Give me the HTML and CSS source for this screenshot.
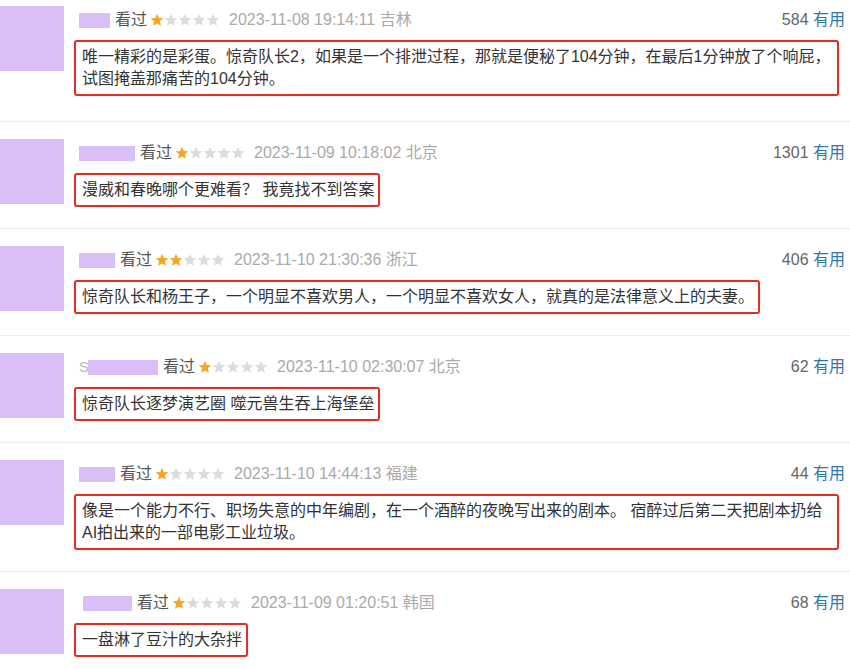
FILE: index.html
```html
<!DOCTYPE html>
<html>
<head>
    <meta charset="utf-8">
    <title>短评</title>
    <link rel="stylesheet" href="styles.css">
</head>
<body>
    <svg class="defs" width="0" height="0">
        <symbol id="star" viewBox="0 0 14 14">
            <polygon points="7,0.8 8.8,5 13.3,5.3 9.9,8.3 10.9,12.8 7,10.4 3.1,12.8 4.1,8.3 0.7,5.3 5.2,5"/>
        </symbol>
    </svg>

    <div class="comments">
        <div class="comment first">
            <div class="avatar"></div>
            <div class="main">
                <div class="meta">
                    <div class="info">
                        <span class="mask mask-xs"></span>
                        <span class="watched">看过</span>
                        <span class="stars">
                            <svg class="star on"><use href="#star"/></svg><svg class="star"><use href="#star"/></svg><svg class="star"><use href="#star"/></svg><svg class="star"><use href="#star"/></svg><svg class="star"><use href="#star"/></svg>
                        </span>
                        <span class="time">2023-11-08 19:14:11 吉林</span>
                    </div>
                    <div class="votes">584 <span class="useful">有用</span></div>
                </div>
                <p class="text">唯一精彩的是彩蛋。惊奇队长2，如果是一个排泄过程，那就是便秘了104分钟，在最后1分钟放了个响屁，试图掩盖那痛苦的104分钟。</p>
            </div>
        </div>

        <div class="comment">
            <div class="avatar"></div>
            <div class="main">
                <div class="meta">
                    <div class="info">
                        <span class="mask mask-l"></span>
                        <span class="watched">看过</span>
                        <span class="stars">
                            <svg class="star on"><use href="#star"/></svg><svg class="star"><use href="#star"/></svg><svg class="star"><use href="#star"/></svg><svg class="star"><use href="#star"/></svg><svg class="star"><use href="#star"/></svg>
                        </span>
                        <span class="time">2023-11-09 10:18:02 北京</span>
                    </div>
                    <div class="votes">1301 <span class="useful">有用</span></div>
                </div>
                <p class="text">漫威和春晚哪个更难看？ 我竟找不到答案</p>
            </div>
        </div>

        <div class="comment">
            <div class="avatar"></div>
            <div class="main">
                <div class="meta">
                    <div class="info">
                        <span class="mask mask-s"></span>
                        <span class="watched">看过</span>
                        <span class="stars">
                            <svg class="star on"><use href="#star"/></svg><svg class="star on"><use href="#star"/></svg><svg class="star"><use href="#star"/></svg><svg class="star"><use href="#star"/></svg><svg class="star"><use href="#star"/></svg>
                        </span>
                        <span class="time">2023-11-10 21:30:36 浙江</span>
                    </div>
                    <div class="votes">406 <span class="useful">有用</span></div>
                </div>
                <p class="text">惊奇队长和杨王子，一个明显不喜欢男人，一个明显不喜欢女人，就真的是法律意义上的夫妻。</p>
            </div>
        </div>

        <div class="comment">
            <div class="avatar"></div>
            <div class="main">
                <div class="meta">
                    <div class="info">
                        <span class="initial">S</span><span class="mask mask-xl"></span>
                        <span class="watched">看过</span>
                        <span class="stars">
                            <svg class="star on"><use href="#star"/></svg><svg class="star"><use href="#star"/></svg><svg class="star"><use href="#star"/></svg><svg class="star"><use href="#star"/></svg><svg class="star"><use href="#star"/></svg>
                        </span>
                        <span class="time">2023-11-10 02:30:07 北京</span>
                    </div>
                    <div class="votes">62 <span class="useful">有用</span></div>
                </div>
                <p class="text">惊奇队长逐梦演艺圈 噬元兽生吞上海堡垒</p>
            </div>
        </div>

        <div class="comment">
            <div class="avatar"></div>
            <div class="main">
                <div class="meta">
                    <div class="info">
                        <span class="mask mask-s"></span>
                        <span class="watched">看过</span>
                        <span class="stars">
                            <svg class="star on"><use href="#star"/></svg><svg class="star"><use href="#star"/></svg><svg class="star"><use href="#star"/></svg><svg class="star"><use href="#star"/></svg><svg class="star"><use href="#star"/></svg>
                        </span>
                        <span class="time">2023-11-10 14:44:13 福建</span>
                    </div>
                    <div class="votes">44 <span class="useful">有用</span></div>
                </div>
                <p class="text">像是一个能力不行、职场失意的中年编剧，在一个酒醉的夜晚写出来的剧本。 宿醉过后第二天把剧本扔给AI拍出来的一部电影工业垃圾。</p>
            </div>
        </div>

        <div class="comment">
            <div class="avatar"></div>
            <div class="main">
                <div class="meta">
                    <div class="info">
                        <span class="mask mask-m"></span>
                        <span class="watched">看过</span>
                        <span class="stars">
                            <svg class="star on"><use href="#star"/></svg><svg class="star"><use href="#star"/></svg><svg class="star"><use href="#star"/></svg><svg class="star"><use href="#star"/></svg><svg class="star"><use href="#star"/></svg>
                        </span>
                        <span class="time">2023-11-09 01:20:51 韩国</span>
                    </div>
                    <div class="votes">68 <span class="useful">有用</span></div>
                </div>
                <p class="text">一盘淋了豆汁的大杂拌</p>
            </div>
        </div>
    </div>
</body>
</html>
```

FILE: styles.css
```css
/* Basic page */
body {
    margin: 0;
    background: #fff;
    color: #333;
    font-family: "Liberation Sans", "Noto Sans CJK SC", sans-serif;
    font-size: 16px;
}
.defs {
    position: absolute;
    width: 0;
    height: 0;
}

/* One comment row */
.comment {
    display: flex;
    align-items: flex-start;
    padding: 17px 0 21px;
    border-bottom: 1px solid #eeeeee;
}
.comment.first {
    padding-top: 6px;
    padding-bottom: 25px;
}
.avatar {
    flex: none;
    width: 64px;
    height: 65px;
    background-color: #dabef7;
}
.main {
    flex: 1;
    margin-left: 10px;
    padding-right: 5px;
}

/* Name, rating and time line */
.meta {
    display: flex;
    justify-content: space-between;
    align-items: center;
    height: 24px;
    margin-top: 2px;
    line-height: 24px;
}
.info {
    display: flex;
    align-items: center;
    padding-left: 5px;
}
.mask {
    display: inline-block;
    height: 15px;
    background-color: #dabef7;
}
.mask-xs { width: 31px; }
.mask-s { width: 36px; }
.mask-m { width: 49px; margin-left: 4px; }
.mask-l { width: 56px; }
.mask-xl { width: 70px; }
.initial {
    color: #bbb;
    font-size: 15px;
    margin-right: -1px;
}
.watched {
    color: #555;
    margin-left: 5px;
}
.stars {
    display: flex;
    margin-left: 3px;
}
.star {
    width: 14px;
    height: 14px;
    fill: #dcdcdc;
}
.star.on {
    fill: #f5a623;
}
.time {
    color: #aaa;
    margin-left: 9px;
}
.votes {
    color: #666;
}
.useful {
    color: #3377aa;
}

/* Highlighted comment text */
.text {
    width: fit-content;
    margin: 8px 6px 0 0;
    padding: 4px 4px 4px 6px;
    border: 2px solid #dd3128;
    border-radius: 3px;
    box-shadow: 0 0 1px rgba(221, 49, 40, 0.6);
    line-height: 22px;
    color: #333;
}
```
